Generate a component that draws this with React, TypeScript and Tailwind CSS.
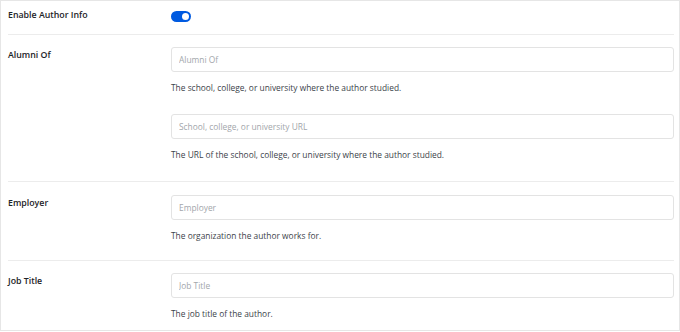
import React from "react";

type Field = { placeholder: string; help: string };

type Row = { label: string; fields: Field[]; spacing: string };

const rows: Row[] = [
    {
        label: "Alumni Of",
        spacing: "pt-[12px] pb-[20px] border-b border-[#ececec]",
        fields: [
            { placeholder: "Alumni Of", help: "The school, college, or university where the author studied." },
            { placeholder: "School, college, or university URL", help: "The URL of the school, college, or university where the author studied." },
        ],
    },
    {
        label: "Employer",
        spacing: "pt-[13px] pb-[18px] border-b border-[#ececec]",
        fields: [{ placeholder: "Employer", help: "The organization the author works for." }],
    },
    {
        label: "Job Title",
        spacing: "pt-[12px]",
        fields: [{ placeholder: "Job Title", help: "The job title of the author." }],
    },
];

function Toggle() {
    return (
        <span className="relative inline-flex h-[11px] w-[20px] items-center rounded-full bg-[#005ae0]">
            <span className="absolute right-[2px] h-[7px] w-[7px] rounded-full bg-white" />
        </span>
    );
}

export default function App() {
    return (
        <div className="h-[332px] w-[680px] bg-white font-['Open_Sans',sans-serif]">
            <div className="flex h-[331px] flex-col border border-[#e6e6e6] pl-[7px] pr-[5px]">
                <div className="flex h-[34px] items-center border-b border-[#ececec] pb-[3px]">
                    <div className="w-[163px] text-[8.8px] font-semibold text-[#1d2327]">Enable Author Info</div>
                    <Toggle />
                </div>
                {rows.map((row) => (
                    <div key={row.label} className={`flex ${row.spacing}`}>
                        <div className="w-[163px] pt-[2px] text-[8.8px] leading-[13px] font-semibold text-[#1d2327]">{row.label}</div>
                        <div className="flex flex-1 flex-col gap-[20px]">
                            {row.fields.map((f) => (
                                <div key={f.placeholder} className="flex flex-col gap-[9px]">
                                    <input
                                        placeholder={f.placeholder}
                                        className="h-[25px] w-full rounded-[3px] border border-[#e3e3e3] px-[7px] text-[8.4px] text-[#333] outline-none placeholder:text-[#a2a6ab]"
                                    />
                                    <p className="text-[8.4px] leading-[13px] text-[#3c434a]">{f.help}</p>
                                </div>
                            ))}
                        </div>
                    </div>
                ))}
            </div>
        </div>
    );
}
